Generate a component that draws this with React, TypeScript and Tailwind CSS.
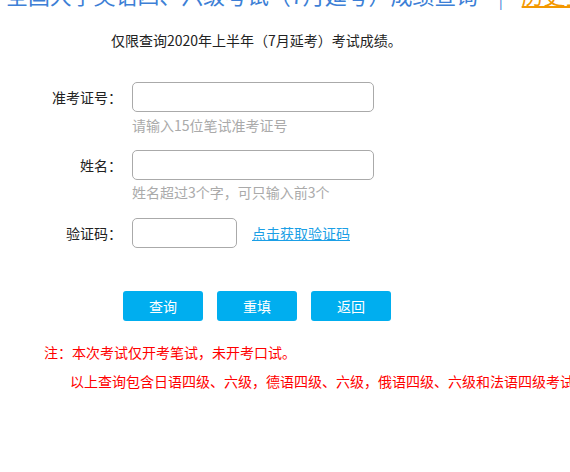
import React from "react";

const font = { fontFamily: '"Noto Sans CJK SC", "Noto Sans", sans-serif' };

export default function App() {
  return (
    <div className="w-[570px] h-[472px] overflow-hidden bg-white text-[14px] text-[#222]" style={font}>
      <div className="mt-[-17px] h-[22px] leading-[22px] flex items-center whitespace-nowrap pl-[6px] text-[22px]">
        <span className="text-[#3d7fd6] tracking-[-0.1px]">全国大学英语四、六级考试（7月延考）成绩查询</span>
        <span className="text-[#3d7fd6] ml-[20px] font-light">|</span>
        <span className="text-[#f39800] underline ml-[18px]">历史查询</span>
      </div>
      <div className="mt-[25px] h-[20px] leading-[20px] pl-[111px] whitespace-nowrap">
        仅限查询2020年上半年（7月延考）考试成绩。
      </div>

      <div className="mt-[32px] flex items-center h-[30px]">
        <div className="w-[122px] text-right whitespace-nowrap">准考证号：</div>
        <input className="ml-[10px] w-[242px] h-[30px] border border-[#aaaaaa] rounded-[5px] outline-none px-2" />
      </div>
      <div className="mt-[4px] h-[18px] leading-[18px] pl-[132px] text-[#aaaaaa] whitespace-nowrap">请输入15位笔试准考证号</div>

      <div className="mt-[16px] flex items-center h-[30px]">
        <div className="w-[122px] text-right whitespace-nowrap">姓名：</div>
        <input className="ml-[10px] w-[242px] h-[30px] border border-[#aaaaaa] rounded-[5px] outline-none px-2" />
      </div>
      <div className="mt-[3px] h-[18px] leading-[18px] pl-[132px] text-[#aaaaaa] whitespace-nowrap">姓名超过3个字，可只输入前3个</div>

      <div className="mt-[17px] flex items-center h-[30px]">
        <div className="w-[122px] text-right whitespace-nowrap">验证码：</div>
        <input className="ml-[10px] w-[105px] h-[30px] border border-[#aaaaaa] rounded-[5px] outline-none px-2" />
        <a className="ml-[15px] text-[#1b9fe6] underline whitespace-nowrap cursor-pointer">点击获取验证码</a>
      </div>

      <div className="mt-[43px] pl-[123px] flex gap-[14px]">
        <button className="w-[80px] h-[30px] rounded-[3px] bg-[#00aeef] text-white text-[14px]">查询</button>
        <button className="w-[80px] h-[30px] rounded-[3px] bg-[#00aeef] text-white text-[14px]">重填</button>
        <button className="w-[80px] h-[30px] rounded-[3px] bg-[#00aeef] text-white text-[14px]">返回</button>
      </div>

      <div className="mt-[21px] h-[20px] leading-[20px] pl-[44px] text-[#ff0000] whitespace-nowrap">注：本次考试仅开考笔试，未开考口试。</div>
      <div className="mt-[10px] h-[18px] leading-[18px] pl-[70px] text-[#ff0000] whitespace-nowrap">以上查询包含日语四级、六级，德语四级、六级，俄语四级、六级和法语四级考试成绩。</div>
    </div>
  );
}
